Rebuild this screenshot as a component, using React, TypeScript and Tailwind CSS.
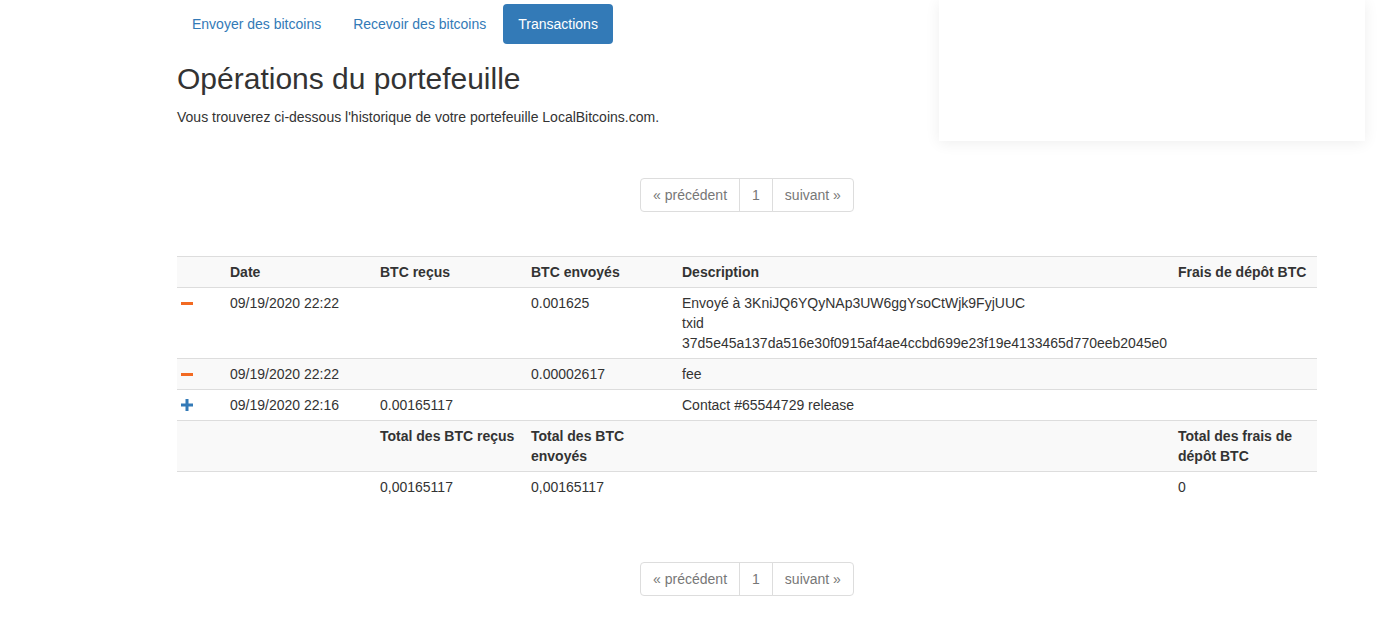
import React from 'react';

interface Tx {
  kind: 'in' | 'out';
  date: string;
  received: string;
  sent: string;
  description: string[];
  fee: string;
}

const txs: Tx[] = [
  {
    kind: 'out',
    date: '09/19/2020 22:22',
    received: '',
    sent: '0.001625',
    description: [
      'Envoyé à 3KniJQ6YQyNAp3UW6ggYsoCtWjk9FyjUUC',
      'txid',
      '37d5e45a137da516e30f0915af4ae4ccbd699e23f19e4133465d770eeb2045e0',
    ],
    fee: '',
  },
  { kind: 'out', date: '09/19/2020 22:22', received: '', sent: '0.00002617', description: ['fee'], fee: '' },
  { kind: 'in', date: '09/19/2020 22:16', received: '0.00165117', sent: '', description: ['Contact #65544729 release'], fee: '' },
];

const MinusIcon = () => (
  <svg width="12" height="12" viewBox="0 0 12 12" className="mt-[4px] ml-[-1px]">
    <rect x="0" y="5" width="12" height="3" fill="#f26a22" />
  </svg>
);

const PlusIcon = () => (
  <svg width="12" height="12" viewBox="0 0 12 12" className="mt-[4px] ml-[-1px]">
    <rect x="0" y="4.5" width="12" height="3" fill="#337ab7" />
    <rect x="4.5" y="0" width="3" height="12" fill="#337ab7" />
  </svg>
);

const Pager = ({ className }: { className: string }) => (
  <div className={`flex justify-center ${className}`}>
    <ul className="flex">
      <li>
        <span className="block px-[12px] py-[6px] border border-[#ddd] rounded-l-[4px] text-[#777] bg-white">
          « précédent
        </span>
      </li>
      <li>
        <span className="block px-[12px] py-[6px] border border-[#ddd] -ml-px text-[#777] bg-white">1</span>
      </li>
      <li>
        <span className="block px-[12px] py-[6px] border border-[#ddd] -ml-px rounded-r-[4px] text-[#777] bg-white">
          suivant »
        </span>
      </li>
    </ul>
  </div>
);

const td = 'p-[5px] border-t border-[#ddd] align-top text-left';

export default function App() {
  return (
    <div className="relative min-h-[630px] bg-white font-['Liberation_Sans',Arial,sans-serif] text-[14px] leading-[20px] text-[#333]">
      {/* floating side panel */}
      <div className="absolute left-[939px] top-0 w-[426px] h-[141px] bg-white shadow-[0_2px_14px_rgba(0,0,0,0.07)]" />

      <div className="ml-[177px] w-[1140px] pt-[4px]">
        {/* Nav pills */}
        <ul className="flex gap-[2px]">
          <li>
            <a className="block px-[15px] py-[10px] rounded-[4px] text-[#337ab7]">Envoyer des bitcoins</a>
          </li>
          <li>
            <a className="block px-[15px] py-[10px] rounded-[4px] text-[#337ab7]">Recevoir des bitcoins</a>
          </li>
          <li>
            <a className="block px-[15px] py-[10px] rounded-[4px] bg-[#337ab7] text-white">Transactions</a>
          </li>
        </ul>

        <h2 className="mt-[18px] mb-[12px] text-[30px] leading-[33px] font-normal">Opérations du portefeuille</h2>
        <p>Vous trouverez ci-dessous l'historique de votre portefeuille LocalBitcoins.com.</p>

        <Pager className="mt-[51px]" />

        <table className="mt-[44px] w-[1140px] table-fixed border-collapse">
          <colgroup>
            <col className="w-[48px]" />
            <col className="w-[150px]" />
            <col className="w-[151px]" />
            <col className="w-[151px]" />
            <col className="w-[496px]" />
            <col className="w-[144px]" />
          </colgroup>
          <tbody>
            <tr className="bg-[#f9f9f9] font-bold">
              <th className={td}></th>
              <th className={td}>Date</th>
              <th className={td}>BTC reçus</th>
              <th className={td}>BTC envoyés</th>
              <th className={td}>Description</th>
              <th className={td}>Frais de dépôt BTC</th>
            </tr>
            {txs.map((t, i) => (
              <tr key={i} className={i % 2 === 1 ? 'bg-[#f9f9f9]' : ''}>
                <td className={td}>{t.kind === 'out' ? <MinusIcon /> : <PlusIcon />}</td>
                <td className={td}>{t.date}</td>
                <td className={td}>{t.received}</td>
                <td className={td}>{t.sent}</td>
                <td className={td}>
                  {t.description.map((d, j) => (
                    <div key={j} className="whitespace-nowrap">{d}</div>
                  ))}
                </td>
                <td className={td}>{t.fee}</td>
              </tr>
            ))}
            <tr className="bg-[#f9f9f9] font-bold">
              <th className={td}></th>
              <th className={td}></th>
              <th className={td}>Total des BTC reçus</th>
              <th className={td}>Total des BTC envoyés</th>
              <th className={td}></th>
              <th className={td}>Total des frais de dépôt BTC</th>
            </tr>
            <tr>
              <td className={td}></td>
              <td className={td}></td>
              <td className={td}>0,00165117</td>
              <td className={td}>0,00165117</td>
              <td className={td}></td>
              <td className={td}>0</td>
            </tr>
          </tbody>
        </table>

        <Pager className="mt-[60px] pb-[34px]" />
      </div>
    </div>
  );
}
